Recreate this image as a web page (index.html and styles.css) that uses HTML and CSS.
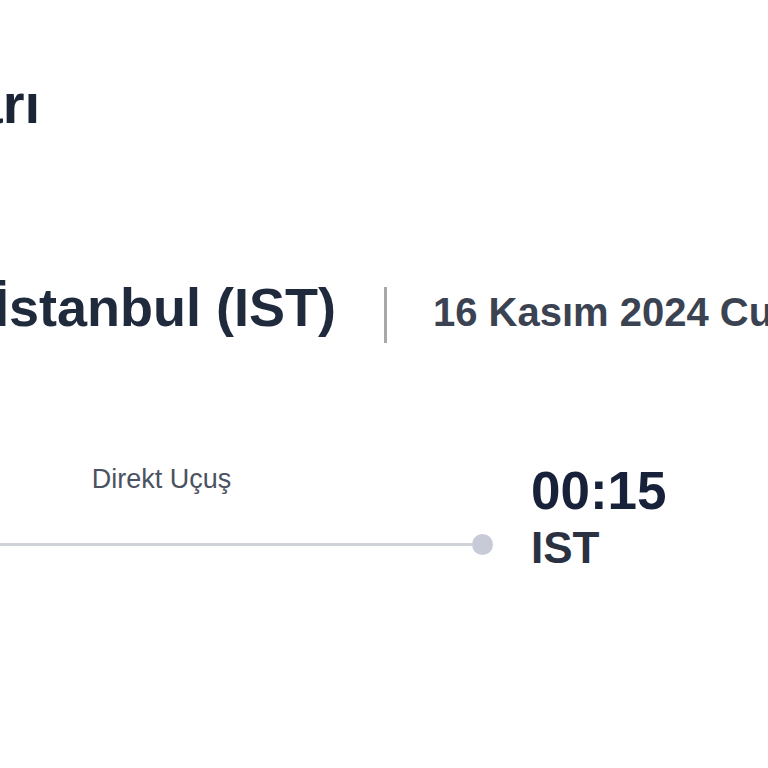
FILE: index.html
```html
<!DOCTYPE html>
<html lang="tr">
<head>
<meta charset="utf-8">
<title>Ankara İstanbul Uçuşları</title>
<link rel="stylesheet" href="styles.css">
</head>
<body>
<main class="page">
  <div class="title-row">
    <h1 class="title">Ankara İstanbul Uçuşları</h1>
  </div>

  <div class="route">
    <h2 class="route-city">İstanbul (IST)</h2>
    <span class="route-sep"></span>
    <span class="route-date">16 Kasım 2024 Cumartesi</span>
  </div>

  <div class="flight">
    <div class="flight-mid">
      <div class="flight-label">Direkt Uçuş</div>
      <div class="track">
        <span class="dot"></span>
        <span class="track-line"></span>
        <span class="dot"></span>
      </div>
    </div>
    <div class="flight-arr">
      <div class="arr-time">00:15</div>
      <div class="arr-code">IST</div>
    </div>
  </div>
</main>
</body>
</html>
```

FILE: styles.css
```css
html, body {
  margin: 0;
  padding: 0;
  background: #ffffff;
  overflow: hidden;
}

body {
  font-family: "Liberation Sans", Arial, sans-serif;
  color: #1c2536;
}

.page {
  margin-left: -200px;
  padding-top: 72px;
  white-space: nowrap;
}

.title-row {
  display: flex;
  justify-content: flex-end;
  width: 240px;
}

.title {
  flex-shrink: 0;
  margin: 0;
  font-size: 56px;
  line-height: 64px;
  font-weight: 700;
  color: #1c2536;
}

.route {
  display: flex;
  align-items: baseline;
  margin-top: 140px;
  padding-left: 194px;
}

.route > * {
  flex-shrink: 0;
}

.route-city {
  margin: 0;
  font-size: 54px;
  line-height: 62px;
  font-weight: 700;
  color: #1f2a3c;
}

.route-sep {
  align-self: flex-start;
  width: 3px;
  height: 56px;
  margin: 11px 0 0 48px;
  background: #a8a8a8;
}

.route-date {
  margin-left: 46px;
  font-size: 40px;
  line-height: 46px;
  font-weight: 700;
  color: #3b4352;
}

.flight {
  display: flex;
  align-items: flex-start;
  margin-top: 120px;
  padding-left: 30px;
}

.flight > * {
  flex-shrink: 0;
}

.flight-mid {
  display: flex;
  flex-direction: column;
  align-items: center;
  width: 663px;
}

.flight-label {
  font-size: 27px;
  line-height: 32px;
  color: #4b5262;
}

.track {
  display: flex;
  align-items: center;
  width: 100%;
  margin-top: 39px;
}

.track-line {
  flex: 1;
  height: 3px;
  background: #cfd3d9;
}

.dot {
  flex-shrink: 0;
  width: 21px;
  height: 21px;
  border-radius: 50%;
  background: #c6cbd7;
}

.flight-arr {
  display: flex;
  flex-direction: column;
  margin-left: 38px;
  padding-top: 1px;
}

.arr-time {
  font-size: 53px;
  line-height: 53px;
  font-weight: 700;
  color: #17223a;
}

.arr-code {
  margin-top: 9px;
  font-size: 44px;
  line-height: 44px;
  font-weight: 700;
  color: #2a3242;
}
```
